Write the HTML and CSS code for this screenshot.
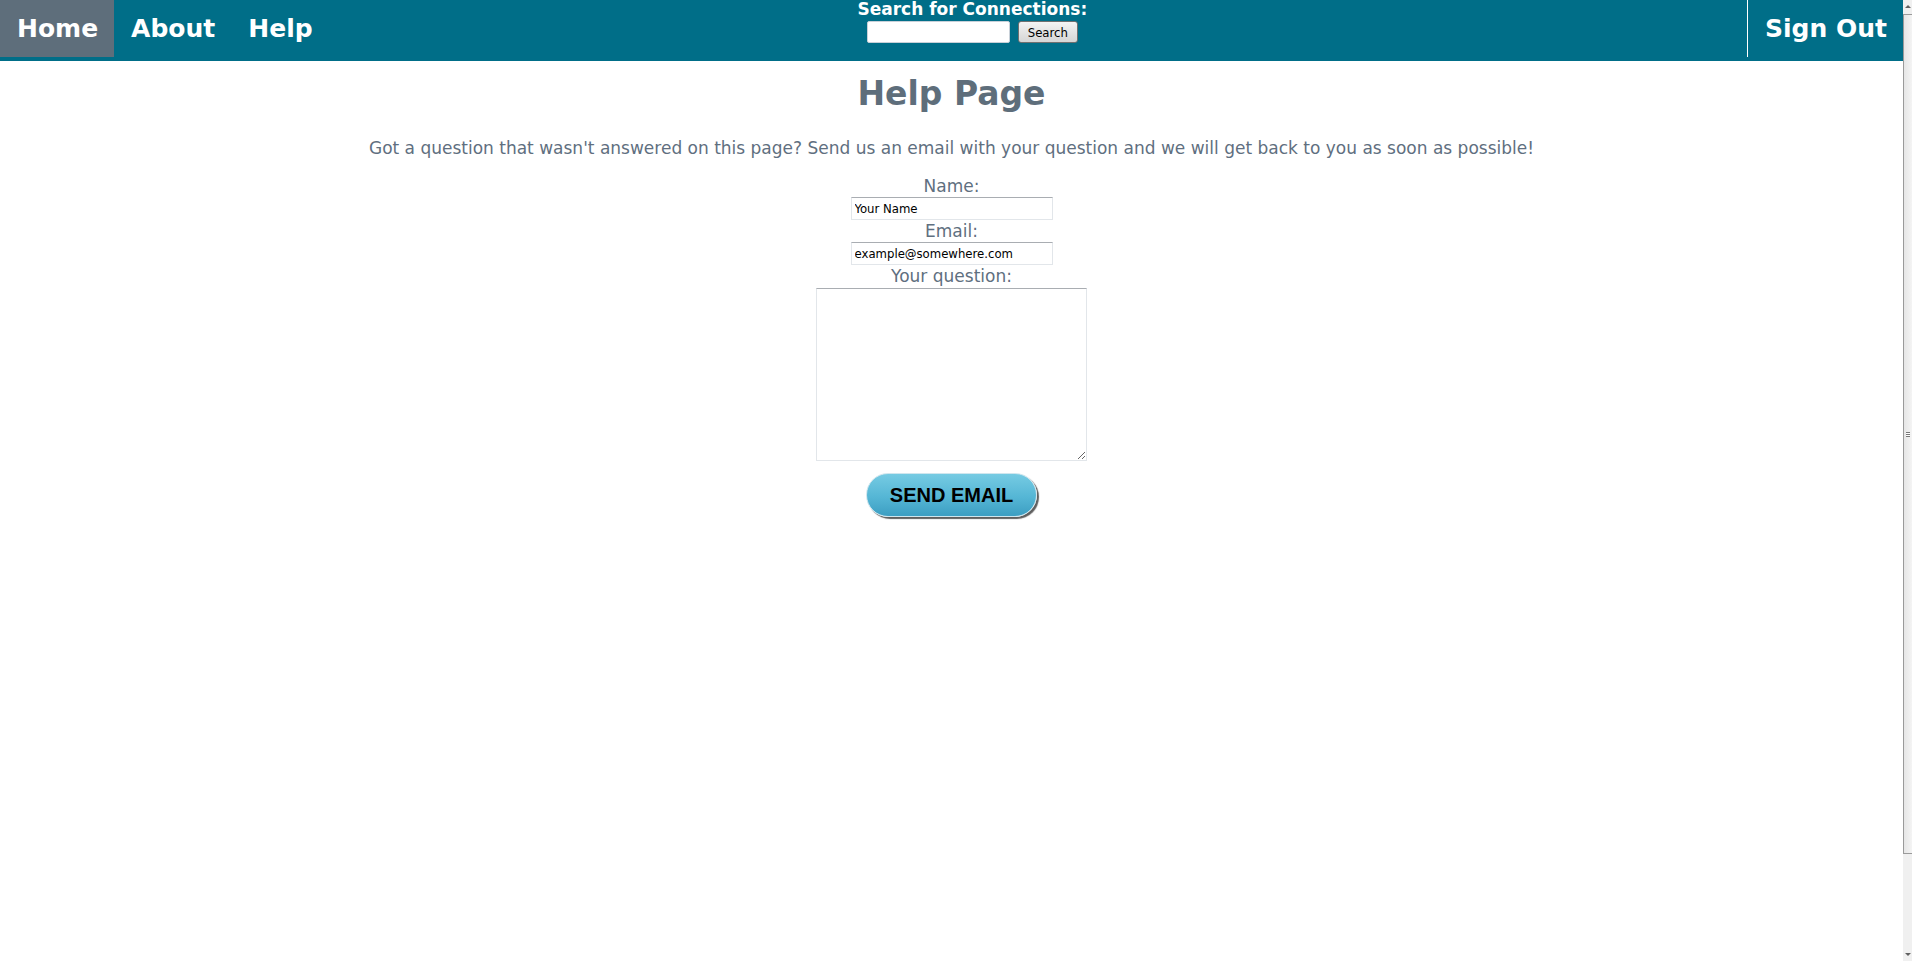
FILE: index.html
```html
<!DOCTYPE html>
<html>
<head>
<meta charset="utf-8">
<title>Help Page</title>
<link rel="stylesheet" href="styles.css">
</head>
<body>
<div class="page">
  <header class="topbar">
    <nav class="nav-left">
      <a class="nav-link active" href="#">Home</a>
      <a class="nav-link" href="#">About</a>
      <a class="nav-link" href="#">Help</a>
    </nav>
    <form class="search">
      <div class="search-title">Search for Connections:</div>
      <div class="search-row">
        <input class="search-input" type="text">
        <button class="search-btn" type="button">Search</button>
      </div>
    </form>
    <a class="nav-link signout" href="#">Sign Out</a>
  </header>
  <main class="content">
    <h1 class="title">Help Page</h1>
    <p class="intro">Got a question that wasn't answered on this page? Send us an email with your question and we will get back to you as soon as possible!</p>
    <form class="help-form">
      <label class="field-label">Name:</label>
      <input class="field-input" type="text" value="Your Name">
      <label class="field-label">Email:</label>
      <input class="field-input" type="text" value="example@somewhere.com">
      <label class="field-label">Your question:</label>
      <textarea class="field-area"></textarea>
      <button class="send-btn" type="button">SEND EMAIL</button>
    </form>
  </main>
</div>
<div class="scrollbar">
  <div class="sb-arrow up"></div>
  <div class="sb-thumb"><span class="sb-grip"></span></div>
  <div class="sb-track"></div>
  <div class="sb-arrow down"></div>
</div>
</body>
</html>
```

FILE: styles.css
```css
html, body {
  margin: 0;
  padding: 0;
  background: #ffffff;
}
body {
  display: flex;
  height: 961px;
  overflow: hidden;
  font-family: "DejaVu Sans", Verdana, sans-serif;
}
.page {
  flex: 1;
  min-width: 0;
}
.topbar {
  display: flex;
  align-items: flex-start;
  height: 61px;
  background: #006e88;
}
.nav-left {
  display: flex;
}
.nav-link {
  display: block;
  height: 57px;
  line-height: 57px;
  padding: 0 16px 0 17px;
  color: #ffffff;
  font-weight: bold;
  font-size: 25px;
  text-decoration: none;
}
.nav-link.active {
  background: #5e6e7b;
}
.search {
  flex: 1;
  display: flex;
  flex-direction: column;
  align-items: center;
  margin: 0;
  padding-right: 131px;
}
.search-title {
  color: #ffffff;
  font-weight: bold;
  font-size: 17px;
  line-height: 19px;
}
.search-row {
  display: flex;
  gap: 8px;
  margin-top: 2px;
}
.search-input {
  width: 143px;
  height: 22px;
  box-sizing: border-box;
  border: 1px solid #c8d0d8;
  border-radius: 2px;
  background: #fff;
  padding: 0;
}
.search-btn {
  width: 60px;
  height: 22px;
  box-sizing: border-box;
  border: 1px solid #707070;
  border-radius: 3px;
  background: linear-gradient(#f4f4f4, #e4e4e4 50%, #d6d6d6);
  font-family: "DejaVu Sans Condensed", "DejaVu Sans", sans-serif;
  font-size: 13px;
  color: #000;
  padding: 0;
}
.signout {
  border-left: 1px solid #ffffff;
}
.content {
  display: flex;
  flex-direction: column;
  align-items: center;
  color: #5e6e7b;
}
.title {
  margin: 13px 0 0;
  font-size: 33px;
  line-height: 40px;
  font-weight: bold;
}
.intro {
  margin: 24px 0 0;
  font-size: 17px;
  line-height: 20px;
  color: #5f6f80;
}
.help-form {
  display: flex;
  flex-direction: column;
  align-items: center;
  margin-top: 17px;
}
.field-label {
  font-size: 17px;
  line-height: 21px;
  padding-top: 1px;
  color: #5f6f80;
}
.field-input {
  width: 202px;
  height: 23px;
  box-sizing: border-box;
  border: 1px solid #e2e6ea;
  border-top-color: #a9adb2;
  margin: 0;
  padding: 0 0 0 3px;
  font-family: "DejaVu Sans Condensed", "DejaVu Sans", sans-serif;
  font-size: 13px;
  color: #000;
}
.field-area {
  width: 271px;
  height: 173px;
  box-sizing: border-box;
  border: 1px solid #e2e6ea;
  border-top-color: #a9adb2;
  margin: 1px 0 0;
  padding: 2px;
  resize: both;
}
.send-btn {
  margin-top: 12px;
  width: 171px;
  height: 44px;
  border: 1px solid #cfe6ee;
  border-radius: 22px;
  background: linear-gradient(#76cbe3, #55b6d5 55%, #3c9ec2);
  box-shadow: 2px 2px 1px #5f5f5f;
  font-family: "Liberation Sans", Arial, sans-serif;
  font-weight: bold;
  font-size: 20px;
  color: #000;
  padding: 0;
}
.scrollbar {
  width: 9px;
  flex: none;
  display: flex;
  flex-direction: column;
  background: #f0f0f0;
}
.sb-arrow {
  height: 14px;
  flex: none;
  position: relative;
}
.sb-arrow.up::after,
.sb-arrow.down::after {
  content: "";
  position: absolute;
  left: 2px;
  border-left: 3px solid transparent;
  border-right: 3px solid transparent;
}
.sb-arrow.up::after {
  top: 5px;
  border-bottom: 3px solid #606060;
}
.sb-arrow.down::after {
  bottom: 5px;
  border-top: 3px solid #606060;
}
.sb-thumb {
  height: 840px;
  box-sizing: border-box;
  border: 1px solid #9a9a9a;
  border-right: none;
  background: linear-gradient(90deg, #e6e6e6, #f4f4f4);
  display: flex;
  align-items: center;
  justify-content: center;
}
.sb-grip {
  width: 4px;
  height: 5px;
  border-top: 1px solid #777;
  border-bottom: 1px solid #777;
  box-sizing: border-box;
  background: linear-gradient(#fff 40%, #777 40%, #777 60%, #fff 60%);
}
.sb-track {
  flex: 1;
}
```
